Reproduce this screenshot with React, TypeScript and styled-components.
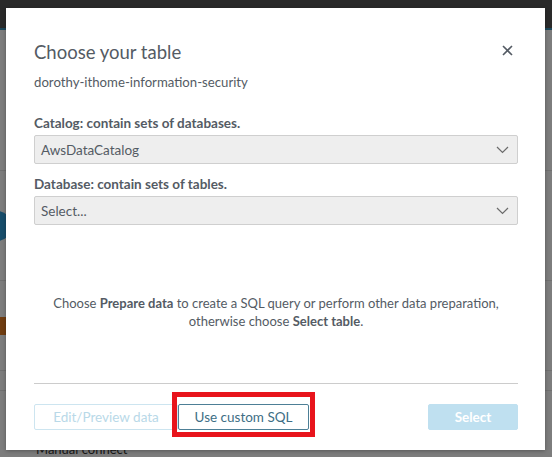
import React from 'react';
import styled, { createGlobalStyle } from 'styled-components';

const GlobalStyle = createGlobalStyle`
    html, body {
        margin: 0;
        padding: 0;
        background: #7d7d7d;
    }
    * {
        box-sizing: border-box;
    }
`;

const Screen = styled.div`
    position: relative;
    width: 552px;
    height: 457px;
    overflow: hidden;
    font-family: Lato, 'Liberation Sans', sans-serif;
`;

const Page = styled.div`
    width: 100%;
    height: 100%;
    background: #fafafa;
    display: flex;
    flex-direction: column;
`;

const TopBar = styled.div`
    height: 30px;
    flex: none;
    background: #555555;
    border-bottom: 2px solid #3a8fb4;
`;

const PageRow = styled.div<{ $height: number }>`
    height: ${(p) => p.$height}px;
    flex: none;
    border-bottom: 1px solid #e0e0e0;
    display: flex;
    align-items: center;
`;

const SideDot = styled.div<{ $color: string }>`
    width: 30px;
    height: 30px;
    margin-left: -18px;
    border-radius: 50%;
    background: ${(p) => p.$color};
`;

const SideBlock = styled.div<{ $color: string }>`
    width: 20px;
    height: 18px;
    margin-left: -8px;
    background: ${(p) => p.$color};
`;

const BottomStrip = styled.div`
    flex: 1;
    display: flex;
    align-items: flex-end;
    padding-left: 36px;
    font-size: 13px;
    color: #333;
`;

const Overlay = styled.div`
    position: absolute;
    inset: 0;
    background: rgba(0, 0, 0, 0.5);
`;

const Modal = styled.div`
    position: absolute;
    left: 6px;
    top: 8px;
    width: 539px;
    height: 442px;
    background: #ffffff;
    box-shadow: 0 1px 4px rgba(0, 0, 0, 0.3);
    padding: 32px 27px 20px 28px;
    display: flex;
    flex-direction: column;
    color: #545b64;
`;

const Header = styled.div`
    display: flex;
    justify-content: space-between;
    align-items: flex-start;
`;

const Title = styled.h2`
    margin: 0;
    font-size: 18.5px;
    line-height: 24px;
    font-weight: 400;
    color: #545b64;
`;

const CloseButton = styled.button`
    border: none;
    background: none;
    padding: 0;
    margin: 4px 5px 0 0;
    width: 12px;
    height: 12px;
    display: flex;
    align-items: center;
    justify-content: center;
    cursor: pointer;
`;

const Subtitle = styled.div`
    margin-top: 8px;
    font-size: 13.2px;
    line-height: 20px;
`;

const Label = styled.div<{ $gap: number }>`
    margin-top: ${(p) => p.$gap}px;
    font-size: 13.5px;
    line-height: 18px;
    font-weight: 700;
`;

const SelectBox = styled.div`
    margin-top: 3px;
    height: 29px;
    background: #eeeeee;
    border: 1px solid #cfcfcf;
    border-radius: 2px;
    display: flex;
    align-items: center;
    justify-content: space-between;
    padding: 0 8px 0 6px;
    font-size: 13.5px;
    color: #545b64;
`;

const Info = styled.div`
    flex: 1;
    display: flex;
    align-items: center;
    justify-content: center;
    text-align: center;
    font-size: 13px;
    line-height: 17.5px;
    padding-top: 17px;

    b {
        font-weight: 700;
    }
`;

const Divider = styled.hr`
    margin: 0;
    border: none;
    border-top: 1px solid #cccccc;
`;

const Footer = styled.div`
    margin-top: 20px;
    display: flex;
    align-items: center;
`;

const Button = styled.button<{ $variant: 'disabled' | 'normal' | 'primary' }>`
    height: 26px;
    padding: 0;
    white-space: nowrap;
    font-family: inherit;
    font-size: 13.5px;
    border-radius: 2px;
    background: ${(p) => (p.$variant === 'primary' ? '#bfe0f0' : '#ffffff')};
    color: ${(p) =>
        p.$variant === 'primary' ? '#ffffff' : p.$variant === 'disabled' ? '#b9d9e8' : '#3d6e85'};
    border: 1px solid
        ${(p) =>
            p.$variant === 'primary' ? '#bfe0f0' : p.$variant === 'disabled' ? '#cde5f0' : '#4d7f96'};
`;

const EditButton = styled(Button)`
    width: 144px;
`;

const SqlButton = styled(Button)`
    width: 131px;
`;

const PrimaryButton = styled(Button)`
    width: 90px;
    margin-left: auto;
    font-weight: 700;
`;

const Highlight = styled.div`
    margin: -12px 0 -7px -6px;
    border: 5px solid #e8141c;
    padding: 7px 1px 2px;
    display: flex;
`;

const Chevron = () => (
    <svg width="13" height="8" viewBox="0 0 13 8">
        <polyline points="1,1 6.5,6.5 12,1" fill="none" stroke="#6b6b6b" strokeWidth="1.2" />
    </svg>
);

const CloseIcon = () => (
    <svg width="11" height="11" viewBox="0 0 11 11">
        <path d="M1 1 L10 10 M10 1 L1 10" stroke="#545b64" strokeWidth="1.6" />
    </svg>
);

const App = () => {
    return (
        <>
            <GlobalStyle />
            <Screen>
                <Page>
                    <TopBar />
                    <PageRow $height={141} />
                    <PageRow $height={110}>
                        <SideDot $color="#2e9bd6" />
                    </PageRow>
                    <PageRow $height={90}>
                        <SideBlock $color="#e07b22" />
                    </PageRow>
                    <PageRow $height={20} />
                    <BottomStrip>Manual connect</BottomStrip>
                </Page>
                <Overlay />
                <Modal>
                    <Header>
                        <Title>Choose your table</Title>
                        <CloseButton aria-label="Close">
                            <CloseIcon />
                        </CloseButton>
                    </Header>
                    <Subtitle>dorothy-ithome-information-security</Subtitle>

                    <Label $gap={22}>Catalog: contain sets of databases.</Label>
                    <SelectBox>
                        <span>AwsDataCatalog</span>
                        <Chevron />
                    </SelectBox>

                    <Label $gap={11}>Database: contain sets of tables.</Label>
                    <SelectBox>
                        <span>Select...</span>
                        <Chevron />
                    </SelectBox>

                    <Info>
                        <div>
                            Choose <b>Prepare data</b> to create a SQL query or perform other data preparation,
                            <br />
                            otherwise choose <b>Select table</b>.
                        </div>
                    </Info>

                    <Divider />
                    <Footer>
                        <EditButton $variant="disabled" disabled>
                            Edit/Preview data
                        </EditButton>
                        <Highlight>
                            <SqlButton $variant="normal">Use custom SQL</SqlButton>
                        </Highlight>
                        <PrimaryButton $variant="primary" disabled>
                            Select
                        </PrimaryButton>
                    </Footer>
                </Modal>
            </Screen>
        </>
    );
};

export default App;
